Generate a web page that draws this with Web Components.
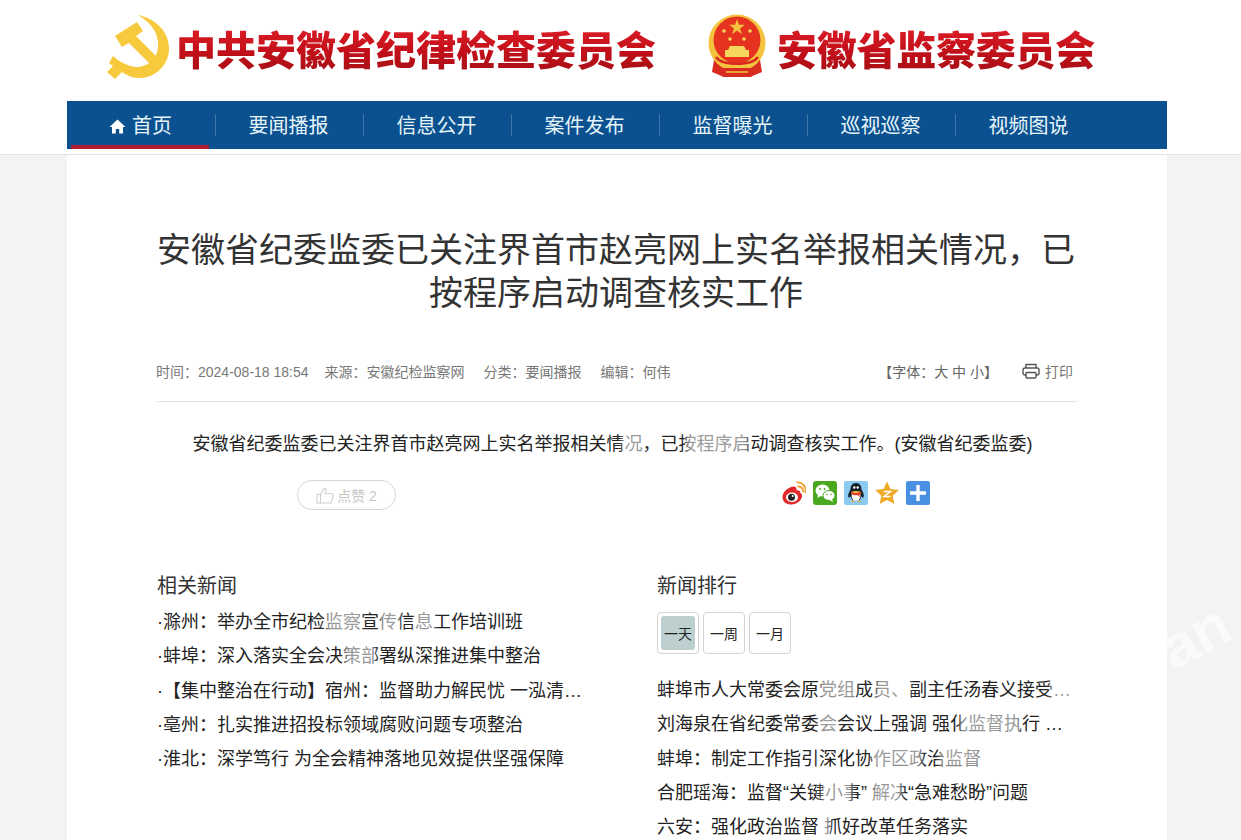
<!DOCTYPE html>
<html lang="zh-CN">
<head>
<meta charset="utf-8">
<title>安徽省纪委监委</title>
<style>
  html { overflow: hidden; }
  body {
    margin: 0;
    background: #f3f3f3;
    font-family: "Liberation Sans", "Noto Sans CJK SC", sans-serif;
    color: #333;
  }
</style>
</head>
<body>
<site-header></site-header>
<article-page>
  <article-head slot="head"
    time="2024-08-18 18:54" source="安徽纪检监察网" category="要闻播报" editor="何伟">安徽省纪委监委已关注界首市赵亮网上实名举报相关情况，已按程序启动调查核实工作</article-head>
  <p slot="body">安徽省纪委监委已关注界首市赵亮网上实名举报相关情况，已按程序启动调查核实工作。(安徽省纪委监委)</p>
  <like-button slot="actions" count="2"></like-button>
  <share-icons slot="actions"></share-icons>
  <news-panel slot="related" heading="相关新闻">
    <news-row dot>滁州：举办全市纪检监察宣传信息工作培训班</news-row>
    <news-row dot>蚌埠：深入落实全会决策部署纵深推进集中整治</news-row>
    <news-row dot>【集中整治在行动】宿州：监督助力解民忧 一泓清流润民心见实效</news-row>
    <news-row dot>亳州：扎实推进招投标领域腐败问题专项整治</news-row>
    <news-row dot>淮北：深学笃行 为全会精神落地见效提供坚强保障</news-row>
  </news-panel>
  <news-panel slot="ranking" heading="新闻排行" tabs>
    <news-row>蚌埠市人大常委会原党组成员、副主任汤春义接受审查调查</news-row>
    <news-row>刘海泉在省纪委常委会会议上强调 强化监督执行 推动全会精神落实</news-row>
    <news-row>蚌埠：制定工作指引深化协作区政治监督</news-row>
    <news-row>合肥瑶海：监督“关键小事” 解决“急难愁盼”问题</news-row>
    <news-row>六安：强化政治监督 抓好改革任务落实</news-row>
  </news-panel>
</article-page>
<wm-overlay></wm-overlay>

<script>
const headerTemplate = document.createElement('template');
headerTemplate.innerHTML = `
<style>
  :host {
    display: block;
    background: #fff;
    height: 154px;
    border-bottom: 1px solid #e3e3e3;
  }
  .logos {
    height: 101px;
    padding-left: 100px;
    display: flex;
    align-items: flex-start;
    box-sizing: border-box;
  }
  svg { flex: none; margin-top: 10px; }
  .name {
    font-family: "Noto Sans CJK SC", sans-serif;
    font-size: 40px;
    line-height: 50px;
    margin-top: 23px;
    font-weight: 900;
    white-space: nowrap;
    color: #c8141c;
    background: linear-gradient(180deg, #e0202a 0%, #c3101a 55%, #a80f16 100%);
    -webkit-background-clip: text;
    background-clip: text;
    -webkit-text-fill-color: transparent;
  }
  .first { margin-left: -4px; width: 524px; }
  .second { margin-left: -3px; letter-spacing: -0.250px; }
  nav {
    width: 1100px;
    height: 48px;
    margin-left: 67px;
    background: #0b5190;
    display: flex;
  }
</style>
<div class="logos">
  <svg width="80" height="72" viewBox="0 0 80 72" aria-hidden="true">
    <path fill="#f7c93c" d="M38 5C55 8 70 22 69 40C68 57 53 69 38 68C32 67.500 27 66 22 62L15 69L7 62L13 56L9 53L13 46C22 54 33 59 43 56C54 53 59 43 58 32C57 21 50 12 38 5Z"/>
    <path fill="#f7c93c" d="M15 26L37 12L43 21L36 26L58 48L51 55L29 33L22 37Z"/>
  </svg>
  <div class="name first">中共安徽省纪律检查委员会</div>
  <svg width="80" height="72" viewBox="0 0 80 72" aria-hidden="true">
    <path fill="#d92c20" d="M14 50L12 62L24 67H50L62 62L60 50Z"/>
    <circle cx="37" cy="33" r="28.500" fill="#f4c43e"/>
    <circle cx="37" cy="30" r="23.500" fill="#e6331f"/>
    <path fill="#f4c43e" d="M37 9l1.900 5.800h6l-4.900 3.600 1.900 5.800-4.900-3.600-4.900 3.600 1.900-5.800-4.900-3.600h6z"/>
    <g fill="#f6d65c"><circle cx="24" cy="21" r="1.800"/><circle cx="50" cy="21" r="1.800"/><circle cx="30" cy="29" r="1.800"/><circle cx="44" cy="29" r="1.800"/></g>
    <path fill="#f6d65c" d="M30 36h14l2 4h3v7H25v-7h3z"/>
    <path fill="none" stroke="#d92c20" stroke-width="2.500" d="M16 47C22 56 52 56 58 47"/>
    <path fill="#d92c20" d="M22 58h30l4 3-5 6H23l-5-6z"/>
    <path fill="none" stroke="#f4c43e" stroke-width="1.500" d="M26 62h22"/>
  </svg>
  <div class="name second">安徽省监察委员会</div>
</div>
<nav><slot></slot></nav>
`;

class SiteHeader extends HTMLElement {
  constructor() {
    super();
    this.attachShadow({ mode: 'open' });
    this.shadowRoot.appendChild(headerTemplate.content.cloneNode(true));
  }

  connectedCallback() {
    const items = ['首页', '要闻播报', '信息公开', '案件发布', '监督曝光', '巡视巡察', '视频图说'];
    items.forEach((label, i) => {
      const item = document.createElement('nav-item');
      item.textContent = label;
      if (i === 0) item.setAttribute('active', '');
      if (i === items.length - 1) item.setAttribute('last', '');
      this.appendChild(item);
    });
  }
}

const navItemTemplate = document.createElement('template');
navItemTemplate.innerHTML = `
<style>
  :host {
    display: flex;
    position: relative;
    width: 148px;
    height: 48px;
    box-sizing: border-box;
    padding: 0 1px 2px 0;
    align-items: center;
    justify-content: center;
    color: #e6f5fa;
    font-size: 20px;
    gap: 6px;
  }
  :host(:not([last]))::after {
    content: "";
    position: absolute;
    right: -1px;
    top: 13px;
    height: 22px;
    width: 1px;
    background: #3f78a9;
  }
  :host([active])::before {
    content: "";
    position: absolute;
    left: 4px;
    width: 138px;
    bottom: 0;
    height: 4px;
    background: #b01c2e;
  }
  svg { display: none; margin-top: 5px; }
  :host([active]) svg { display: block; }
</style>
<svg width="17" height="15" viewBox="0 0 17 15" aria-hidden="true">
  <path fill="#fff" d="M8.500 0.500L16.500 8H14V14.500H10.200V10H6.800V14.500H3V8H0.500Z"/>
</svg>
<slot></slot>
`;

class NavItem extends HTMLElement {
  constructor() {
    super();
    this.attachShadow({ mode: 'open' });
    this.shadowRoot.appendChild(navItemTemplate.content.cloneNode(true));
  }
}

const pageTemplate = document.createElement('template');
pageTemplate.innerHTML = `
<style>
  :host {
    display: block;
    width: 1100px;
    margin-left: 67px;
    height: 700px;
    background: #fff;
    box-sizing: border-box;
    padding: 74px 90px 0;
  }
  .body {
    font-size: 18px;
    line-height: 30px;
    margin-top: 27px;
    padding-right: 9px;
    text-align: center;
    color: #222;
  }
  ::slotted(p) { margin: 0; }
  .actions {
    display: flex;
    margin-top: 21px;
    padding-left: 140px;
    height: 30px;
  }
  .columns {
    display: flex;
    margin-top: 59px;
  }
  .col { width: 500px; flex: none; }
</style>
<slot name="head"></slot>
<div class="body"><slot name="body"></slot></div>
<div class="actions"><slot name="actions"></slot></div>
<div class="columns">
  <div class="col"><slot name="related"></slot></div>
  <div class="col"><slot name="ranking"></slot></div>
</div>
`;

class ArticlePage extends HTMLElement {
  constructor() {
    super();
    this.attachShadow({ mode: 'open' });
    this.shadowRoot.appendChild(pageTemplate.content.cloneNode(true));
  }
}

const headTemplate = document.createElement('template');
headTemplate.innerHTML = `
<style>
  :host { display: block; }
  h1 {
    margin: 0;
    padding-right: 2px;
    font-size: 34px;
    line-height: 43px;
    font-weight: 400;
    color: #333;
    text-align: center;
  }
  .meta {
    margin-top: 41px;
    height: 30px;
    padding-bottom: 15px;
    border-bottom: 1px solid #e4e4e4;
    display: flex;
    align-items: center;
    font-size: 14px;
    color: #777;
    white-space: nowrap;
  }
  .meta span { margin-right: 19px; }
  .meta .time { margin-left: -1px; margin-right: 16px; }
  .meta .plain { margin: 0; }
  .tools { margin-left: auto; display: flex; align-items: center; color: #777; padding-right: 4px; }
  .tools .size { margin-right: 24px; color: #666; }
  .tools .print { margin-right: 0; display: flex; align-items: center; gap: 5px; }
</style>
<h1><slot></slot></h1>
<div class="meta">
  <span class="time">时间：<span class="date plain"></span></span>
  <span>来源：<span class="source plain"></span></span>
  <span>分类：<span class="category plain"></span></span>
  <span>编辑：<span class="editor plain"></span></span>
  <div class="tools">
    <span class="size">【字体：大 中 小】</span>
    <span class="print">
      <svg width="18" height="16" viewBox="0 0 18 16" fill="none" stroke="#555" stroke-width="1.400" aria-hidden="true">
        <path d="M4 5V1.500H14V5"/>
        <rect x="1" y="5" width="16" height="7" rx="2"/>
        <rect x="4" y="9.500" width="10" height="5.500" rx="1" fill="#fff"/>
      </svg>打印
    </span>
  </div>
</div>
`;

class ArticleHead extends HTMLElement {
  constructor() {
    super();
    this.attachShadow({ mode: 'open' });
    this.shadowRoot.appendChild(headTemplate.content.cloneNode(true));
  }

  connectedCallback() {
    this.shadowRoot.querySelector('.date').textContent = this.getAttribute('time');
    this.shadowRoot.querySelector('.source').textContent = this.getAttribute('source');
    this.shadowRoot.querySelector('.category').textContent = this.getAttribute('category');
    this.shadowRoot.querySelector('.editor').textContent = this.getAttribute('editor');
  }
}

const likeTemplate = document.createElement('template');
likeTemplate.innerHTML = `
<style>
  :host {
    display: flex;
    align-items: center;
    justify-content: center;
    gap: 3px;
    width: 99px;
    height: 30px;
    box-sizing: border-box;
    border: 1px solid #d6d6d6;
    border-radius: 15px;
    font-size: 14px;
    color: #c4c4c4;
    flex: none;
  }
</style>
<svg width="18" height="17" viewBox="0 0 18 17" fill="none" stroke="#cfcfcf" stroke-width="1.100" aria-hidden="true">
  <path d="M1 7.500H4.500V16H1Z"/>
  <path d="M4.500 7.500L8 1.500C9.500 1 10.500 2 10 3.500L9.200 6.500H15.500C17 6.500 17.300 7.800 17 9L15.500 14.800C15.300 15.600 14.700 16 14 16H4.500"/>
</svg>
<span>点赞 <span class="count"></span></span>
`;

class LikeButton extends HTMLElement {
  constructor() {
    super();
    this.attachShadow({ mode: 'open' });
    this.shadowRoot.appendChild(likeTemplate.content.cloneNode(true));
  }

  connectedCallback() {
    this.shadowRoot.querySelector('.count').textContent = this.getAttribute('count');
  }
}

const shareTemplate = document.createElement('template');
shareTemplate.innerHTML = `
<style>
  :host {
    display: flex;
    gap: 7px;
    margin-left: 386px;
    margin-top: 1px;
    height: 24px;
  }
  svg { display: block; flex: none; }
</style>
<svg width="24" height="24" viewBox="0 0 24 24" aria-hidden="true">
  <path fill="#e02a2a" d="M0.500 16C0.500 11 6.500 6 11 5.500C14 5.200 15 7 14.500 9.500C17 9 18.500 10 18.300 12C20 12.800 20.500 14.500 20 16C19 20 14 23.500 9.500 23.500C4.500 23.500 0.500 21 0.500 16Z"/>
  <ellipse cx="10" cy="16.300" rx="6" ry="4.800" fill="#fff"/>
  <circle cx="9.500" cy="16.300" r="3.500" fill="#222"/>
  <circle cx="10.700" cy="15" r="1" fill="#fff"/>
  <path fill="none" stroke="#f0a030" stroke-width="1.900" d="M15.500 5.500C18.800 5 21.500 7.500 21 11"/>
  <path fill="none" stroke="#f0a030" stroke-width="1.900" d="M14.500 1.500C20 0.500 25 6 23.300 12"/>
</svg>
<svg width="24" height="24" viewBox="0 0 24 24" aria-hidden="true">
  <rect width="24" height="24" rx="3" fill="#4aa820"/>
  <ellipse cx="9.500" cy="9.500" rx="7" ry="6" fill="#fff"/>
  <path fill="#fff" d="M5 13L4.500 17L8.500 14.500Z"/>
  <ellipse cx="16" cy="14.500" rx="6" ry="5" fill="#fff" stroke="#4aa820"/>
  <path fill="#fff" d="M19 18L20 21L16.500 19Z"/>
  <g fill="#4aa820"><circle cx="7" cy="8" r="1"/><circle cx="11.500" cy="8" r="1"/><circle cx="14" cy="13.500" r=".8"/><circle cx="18" cy="13.500" r=".8"/></g>
</svg>
<svg width="24" height="24" viewBox="0 0 24 24" aria-hidden="true">
  <rect width="24" height="24" rx="2" fill="#8ccbef"/>
  <path fill="#16202c" d="M12 2C8 2 6.500 5 6.500 8.500C5 11 3.500 14 4.500 16.500C5.500 16.800 6 16 6.500 15.500C7 17 7.500 18 8.500 19H15.500C16.500 18 17 17 17.500 15.500C18 16 18.500 16.800 19.500 16.500C20.500 14 19 11 17.500 8.500C17.500 5 16 2 12 2Z"/>
  <ellipse cx="12" cy="15" rx="4.500" ry="4.500" fill="#fff"/>
  <path fill="#e73a20" d="M7 10.500C10 12.500 14 12.500 17 10.500L17.500 12.500L15.500 13.500L15.800 16L13.800 14.300C11 14.500 8.500 14 7 12.500Z"/>
  <path fill="#f4a924" d="M7 11C9 12 15 12 17 11C15 9.500 9 9.500 7 11ZM7 20.500C8 19 10 19.200 11 21H7ZM13 21C14 19.200 16 19 17 20.500V21Z"/>
  <circle cx="10.300" cy="6.500" r="1.200" fill="#fff"/><circle cx="13.700" cy="6.500" r="1.200" fill="#fff"/>
</svg>
<svg width="24" height="24" viewBox="0 0 24 24" aria-hidden="true">
  <path fill="#eea927" d="M12 0.500L15.500 8L23.800 9L17.700 14.700L19.300 23L12 19L4.700 23L6.300 14.700L0.200 9L8.500 8Z"/>
  <path fill="none" stroke="#fff" stroke-width="1.500" d="M8.500 10.500H15.500L9 15.500H15.500"/>
</svg>
<svg width="24" height="24" viewBox="0 0 24 24" aria-hidden="true">
  <rect width="24" height="24" rx="2" fill="#4a90e2"/>
  <path fill="#fff" d="M10.300 4H13.700V10.300H20V13.700H13.700V20H10.300V13.700H4V10.300H10.300Z"/>
</svg>
`;

class ShareIcons extends HTMLElement {
  constructor() {
    super();
    this.attachShadow({ mode: 'open' });
    this.shadowRoot.appendChild(shareTemplate.content.cloneNode(true));
  }
}

const panelTemplate = document.createElement('template');
panelTemplate.innerHTML = `
<style>
  :host { display: block; }
  h2 {
    margin: 0 0 -2px;
    padding-top: 2px;
    font-size: 20px;
    line-height: 30px;
    font-weight: 400;
    color: #333;
  }
  .tabs {
    display: none;
    gap: 4px;
    margin: 13px 0 19px;
  }
  :host([tabs]) .tabs { display: flex; }
  :host(:not([tabs])) .list { margin-top: 6px; }
  .tab {
    width: 42px;
    height: 42px;
    box-sizing: border-box;
    border: 1px solid #d4d4d4;
    border-radius: 4px;
    padding: 3px;
    font-size: 14px;
    color: #222;
  }
  .tab div {
    height: 100%;
    display: flex;
    align-items: center;
    justify-content: center;
    border-radius: 3px;
  }
  .tab.on div { background: #bdd0cf; }
</style>
<h2></h2>
<div class="tabs">
  <div class="tab on"><div>一天</div></div>
  <div class="tab"><div>一周</div></div>
  <div class="tab"><div>一月</div></div>
</div>
<div class="list"><slot></slot></div>
`;

class NewsPanel extends HTMLElement {
  constructor() {
    super();
    this.attachShadow({ mode: 'open' });
    this.shadowRoot.appendChild(panelTemplate.content.cloneNode(true));
  }

  connectedCallback() {
    this.shadowRoot.querySelector('h2').textContent = this.getAttribute('heading');
  }
}

// no whitespace around style and slot: it would show as a gap after the dot
const rowTemplate = document.createElement('template');
rowTemplate.innerHTML = `<style>
  :host {
    display: block;
    width: 415px;
    font-size: 18px;
    line-height: 34.300px;
    height: 34.300px;
    color: #222;
    white-space: nowrap;
    overflow: hidden;
    text-overflow: ellipsis;
  }
  :host([dot]) { width: 426px; }
  :host([dot])::before {
    content: "·";
    display: inline-block;
    width: 6px;
  }
</style><slot></slot>`;

class NewsRow extends HTMLElement {
  constructor() {
    super();
    this.attachShadow({ mode: 'open' });
    this.shadowRoot.appendChild(rowTemplate.content.cloneNode(true));
  }
}

// faint watermark of the reference: white patches over the text, letters on the grey margin
const overlayTemplate = document.createElement('template');
overlayTemplate.innerHTML = `
<style>
  :host {
    position: absolute;
    left: 0;
    top: 0;
    width: 1241px;
    height: 840px;
    overflow: hidden;
    pointer-events: none;
  }
  i {
    position: absolute;
    background: rgba(255, 255, 255, .55);
    filter: blur(2px);
  }
  span {
    position: absolute;
    left: 1160px;
    top: 602px;
    font: 700 60px "Liberation Sans", sans-serif;
    color: rgba(255, 255, 255, .55);
    transform: rotate(-28deg);
  }
</style>
<span>an</span>
`;

class WmOverlay extends HTMLElement {
  constructor() {
    super();
    this.attachShadow({ mode: 'open' });
    this.shadowRoot.appendChild(overlayTemplate.content.cloneNode(true));
  }

  connectedCallback() {
    const patches = [
      [622, 432, 22, 22], [686, 432, 62, 22],
      [326, 610, 36, 22], [380, 610, 20, 22], [415, 610, 20, 22],
      [345, 644, 30, 22],
      [820, 678, 36, 22], [876, 678, 34, 22], [1050, 678, 24, 22],
      [818, 712, 20, 22], [960, 712, 60, 22],
      [872, 746, 50, 22], [940, 746, 40, 22],
      [822, 781, 30, 22], [872, 781, 30, 22],
      [820, 815, 10, 22],
    ];
    patches.forEach(([left, top, width, height]) => {
      const patch = document.createElement('i');
      patch.style.cssText = `left:${left}px;top:${top}px;width:${width}px;height:${height}px`;
      this.shadowRoot.appendChild(patch);
    });
  }
}

customElements.define('site-header', SiteHeader);
customElements.define('nav-item', NavItem);
customElements.define('article-page', ArticlePage);
customElements.define('article-head', ArticleHead);
customElements.define('like-button', LikeButton);
customElements.define('share-icons', ShareIcons);
customElements.define('news-panel', NewsPanel);
customElements.define('news-row', NewsRow);
customElements.define('wm-overlay', WmOverlay);
</script>
</body>
</html>
